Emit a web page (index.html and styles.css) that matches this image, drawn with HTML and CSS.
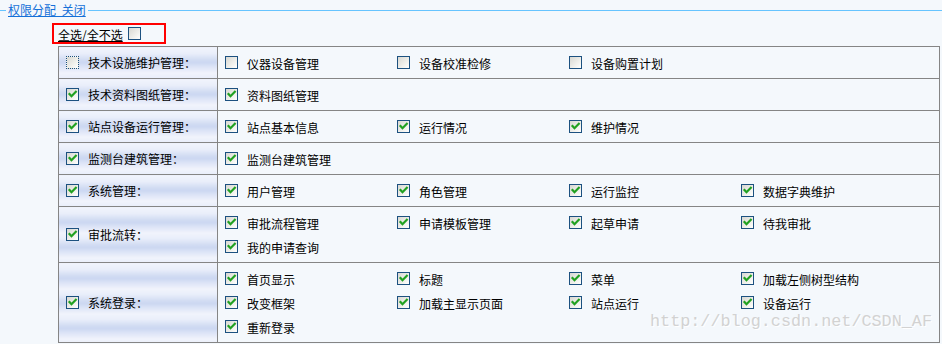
FILE: index.html
```html
<!DOCTYPE html>
<html lang="zh-CN">
<head>
    <meta charset="UTF-8">
    <title>权限分配</title>
    <link rel="stylesheet" href="styles.css">
</head>
<body>
    <svg class="defs" width="0" height="0">
        <symbol id="tick" viewBox="0 0 13 13">
            <path d="M3.5 6 L5.5 8.2 L9.8 3.8" fill="none" stroke="#21a121" stroke-width="2.2" stroke-linecap="square"/>
        </symbol>
    </svg>

    <div class="bar">
        <span class="line short"></span>
        <a href="#" class="title">权限分配 关闭</a>
        <span class="line"></span>
    </div>

    <div class="all">
        <span class="all-text">全选/全不选</span>
        <span class="cb"></span>
    </div>

    <table class="perm">
        <colgroup><col class="c1"><col></colgroup>
        <tr>
            <td class="grp"><span class="cb focus"></span>技术设施维护管理：</td>
            <td class="items">
                <span class="item"><span class="cb"></span>仪器设备管理</span><span class="item"><span class="cb"></span>设备校准检修</span><span class="item"><span class="cb"></span>设备购置计划</span>
            </td>
        </tr>
        <tr>
            <td class="grp"><span class="cb"><svg><use href="#tick"/></svg></span>技术资料图纸管理：</td>
            <td class="items">
                <span class="item"><span class="cb"><svg><use href="#tick"/></svg></span>资料图纸管理</span>
            </td>
        </tr>
        <tr>
            <td class="grp"><span class="cb"><svg><use href="#tick"/></svg></span>站点设备运行管理：</td>
            <td class="items">
                <span class="item"><span class="cb"><svg><use href="#tick"/></svg></span>站点基本信息</span><span class="item"><span class="cb"><svg><use href="#tick"/></svg></span>运行情况</span><span class="item"><span class="cb"><svg><use href="#tick"/></svg></span>维护情况</span>
            </td>
        </tr>
        <tr>
            <td class="grp"><span class="cb"><svg><use href="#tick"/></svg></span>监测台建筑管理：</td>
            <td class="items">
                <span class="item"><span class="cb"><svg><use href="#tick"/></svg></span>监测台建筑管理</span>
            </td>
        </tr>
        <tr>
            <td class="grp"><span class="cb"><svg><use href="#tick"/></svg></span>系统管理：</td>
            <td class="items">
                <span class="item"><span class="cb"><svg><use href="#tick"/></svg></span>用户管理</span><span class="item"><span class="cb"><svg><use href="#tick"/></svg></span>角色管理</span><span class="item"><span class="cb"><svg><use href="#tick"/></svg></span>运行监控</span><span class="item"><span class="cb"><svg><use href="#tick"/></svg></span>数据字典维护</span>
            </td>
        </tr>
        <tr>
            <td class="grp"><span class="cb"><svg><use href="#tick"/></svg></span>审批流转：</td>
            <td class="items">
                <span class="item"><span class="cb"><svg><use href="#tick"/></svg></span>审批流程管理</span><span class="item"><span class="cb"><svg><use href="#tick"/></svg></span>申请模板管理</span><span class="item"><span class="cb"><svg><use href="#tick"/></svg></span>起草申请</span><span class="item"><span class="cb"><svg><use href="#tick"/></svg></span>待我审批</span><span class="item"><span class="cb"><svg><use href="#tick"/></svg></span>我的申请查询</span>
            </td>
        </tr>
        <tr>
            <td class="grp"><span class="cb"><svg><use href="#tick"/></svg></span>系统登录：</td>
            <td class="items">
                <span class="item"><span class="cb"><svg><use href="#tick"/></svg></span>首页显示</span><span class="item"><span class="cb"><svg><use href="#tick"/></svg></span>标题</span><span class="item"><span class="cb"><svg><use href="#tick"/></svg></span>菜单</span><span class="item"><span class="cb"><svg><use href="#tick"/></svg></span>加载左侧树型结构</span><span class="item"><span class="cb"><svg><use href="#tick"/></svg></span>改变框架</span><span class="item"><span class="cb"><svg><use href="#tick"/></svg></span>加载主显示页面</span><span class="item"><span class="cb"><svg><use href="#tick"/></svg></span>站点运行</span><span class="item"><span class="cb"><svg><use href="#tick"/></svg></span>设备运行</span><span class="item"><span class="cb"><svg><use href="#tick"/></svg></span>重新登录</span>
            </td>
        </tr>
    </table>

    <div class="mark">http://blog.csdn.net/CSDN_AF</div>
</body>
</html>
```

FILE: styles.css
```css
*{
    margin: 0;
    padding: 0;
    box-sizing: border-box;
}
body{
    background: #f4f8fc;
    font-family: "Noto Sans CJK SC", "Liberation Sans", sans-serif;
    font-size: 12px;
    color: #000;
    position: relative;
    height: 344px;
    overflow: hidden;
}
.defs{
    position: absolute;
}
/* 顶部标题线 */
.bar{
    display: flex;
    align-items: center;
    height: 20px;
}
.bar .line{
    flex: 1;
    border-top: 1px solid #66c4ff;
    margin-left: 2px;
}
.bar .line.short{
    flex: none;
    width: 6px;
    margin-left: 0;
    margin-right: 2px;
}
.bar .title{
    color: #1470d8;
    text-decoration: underline;
    line-height: 14px;
    word-spacing: 3px;
}
/* 全选 */
.all{
    display: flex;
    align-items: center;
    width: 114px;
    height: 21px;
    margin: 3px 0 2px 52px;
    padding-left: 4px;
    border: 2px solid #f00;
}
.all-text{
    text-decoration: underline;
    line-height: 14px;
    margin-top: 2px;
}
.all .cb{
    margin-left: 5px;
}
/* 复选框 */
.cb{
    display: inline-block;
    width: 13px;
    height: 13px;
    border: 1px solid #1c5180;
    background: linear-gradient(135deg, #d8d8d2 0%, #f4f4f0 70%, #fff 100%);
    flex: none;
    position: relative;
}
.cb.focus{
    border: 1px dotted #1c5180;
}
.cb svg{
    position: absolute;
    left: -1px;
    top: -1px;
    width: 13px;
    height: 13px;
}
/* 权限表 */
.perm{
    margin-left: 58px;
    width: 882px;
    border-collapse: collapse;
    table-layout: fixed;
}
.perm col.c1{
    width: 159px;
}
.perm td{
    border: 1px solid #858585;
    padding: 4px 0 3px 7px;
    vertical-align: middle;
}
.grp{
    background: repeating-linear-gradient(to bottom, #f1f4fc 0, #e9eefa 6px, #d3ddf3 12px, #cbd7f1 15px, #dbe3f6 19px, #eff2fb 25px);
    line-height: 24px;
}
.grp .cb{
    margin-right: 9px;
    vertical-align: -1px;
}
.items{
    background: #f4f8fc;
}
.item{
    display: inline-flex;
    align-items: center;
    width: 172px;
    height: 24px;
    vertical-align: top;
}
.item .cb{
    margin-right: 9px;
    margin-bottom: 2px;
}
/* 水印 */
.mark{
    position: absolute;
    left: 650px;
    top: 312px;
    font-family: "Liberation Mono", monospace;
    font-size: 16.8px;
    color: #d2d2d2;
    text-shadow: 1px 1px 0 #fff;
}
```
